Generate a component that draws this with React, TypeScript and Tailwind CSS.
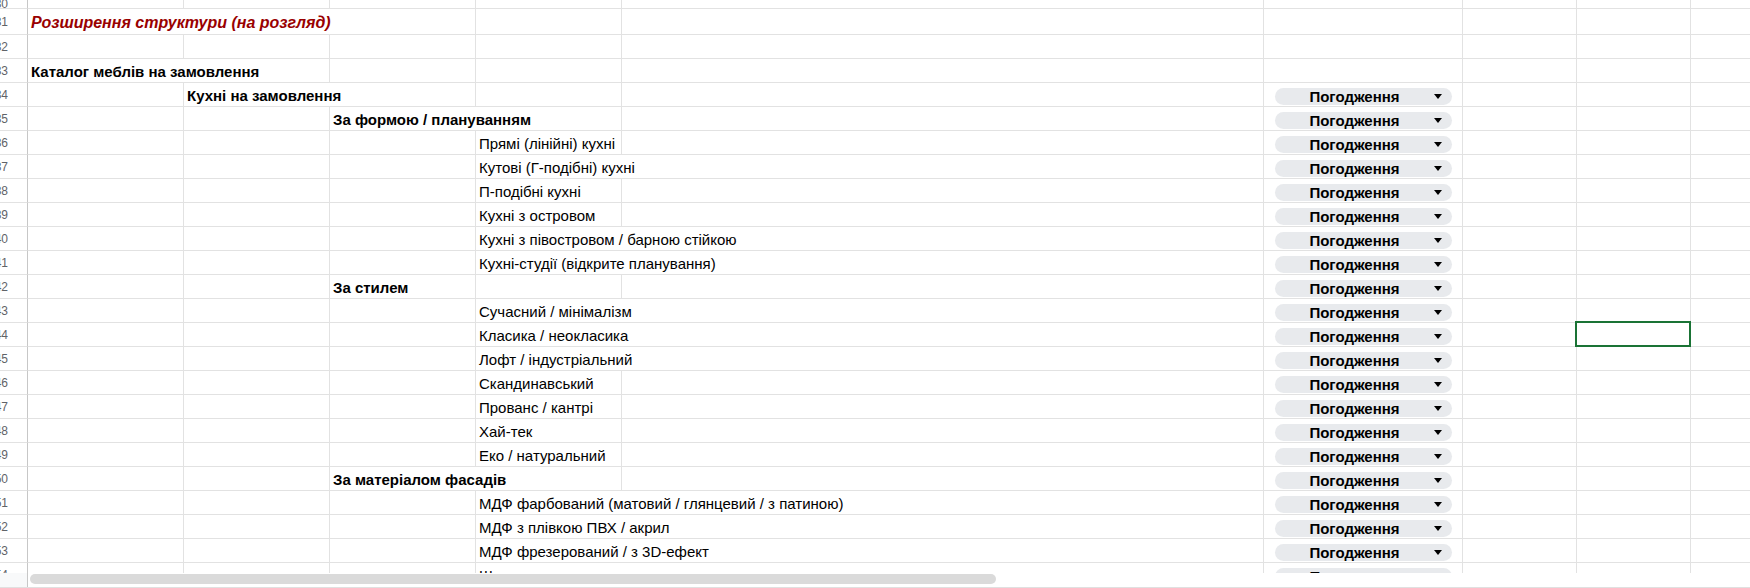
import React from "react";

const COLS = [156, 146, 146, 146, 642, 199, 114, 114, 200];

type Row = {
  n: number;
  h: number;
  col?: number;
  text?: string;
  span?: number;
  kind?: "title" | "bold" | "normal";
  chip?: boolean;
};

const rows: Row[] = [
  { n: 30, h: 9 },
  { n: 31, h: 26, col: 0, span: 3, kind: "title", text: "Розширення структури (на розгляд)" },
  { n: 32, h: 24 },
  { n: 33, h: 24, col: 0, span: 2, kind: "bold", text: "Каталог меблів на замовлення" },
  { n: 34, h: 24, col: 1, span: 2, kind: "bold", text: "Кухні на замовлення", chip: true },
  { n: 35, h: 24, col: 2, span: 2, kind: "bold", text: "За формою / плануванням", chip: true },
  { n: 36, h: 24, col: 3, span: 1, kind: "normal", text: "Прямі (лінійні) кухні", chip: true },
  { n: 37, h: 24, col: 3, span: 2, kind: "normal", text: "Кутові (Г-подібні) кухні", chip: true },
  { n: 38, h: 24, col: 3, span: 1, kind: "normal", text: "П-подібні кухні", chip: true },
  { n: 39, h: 24, col: 3, span: 1, kind: "normal", text: "Кухні з островом", chip: true },
  { n: 40, h: 24, col: 3, span: 2, kind: "normal", text: "Кухні з півостровом / барною стійкою", chip: true },
  { n: 41, h: 24, col: 3, span: 2, kind: "normal", text: "Кухні-студії (відкрите планування)", chip: true },
  { n: 42, h: 24, col: 2, span: 1, kind: "bold", text: "За стилем", chip: true },
  { n: 43, h: 24, col: 3, span: 2, kind: "normal", text: "Сучасний / мінімалізм", chip: true },
  { n: 44, h: 24, col: 3, span: 2, kind: "normal", text: "Класика / неокласика", chip: true },
  { n: 45, h: 24, col: 3, span: 2, kind: "normal", text: "Лофт / індустріальний", chip: true },
  { n: 46, h: 24, col: 3, span: 1, kind: "normal", text: "Скандинавський", chip: true },
  { n: 47, h: 24, col: 3, span: 1, kind: "normal", text: "Прованс / кантрі", chip: true },
  { n: 48, h: 24, col: 3, span: 1, kind: "normal", text: "Хай-тек", chip: true },
  { n: 49, h: 24, col: 3, span: 1, kind: "normal", text: "Еко / натуральний", chip: true },
  { n: 50, h: 24, col: 2, span: 2, kind: "bold", text: "За матеріалом фасадів", chip: true },
  { n: 51, h: 24, col: 3, span: 2, kind: "normal", text: "МДФ фарбований (матовий / глянцевий / з патиною)", chip: true },
  { n: 52, h: 24, col: 3, span: 2, kind: "normal", text: "МДФ з плівкою ПВХ / акрил", chip: true },
  { n: 53, h: 24, col: 3, span: 2, kind: "normal", text: "МДФ фрезерований / з 3D-ефект", chip: true },
  { n: 54, h: 24, col: 3, span: 2, kind: "normal", text: "Шпон", chip: true },
];

function Chip() {
  return (
    <div className="h-[17px] flex-1 rounded-full bg-[#e8eaed] flex items-center pr-[10px]">
      <span className="flex-1 text-center text-[15px] leading-[17px] font-bold text-black whitespace-nowrap">
        Погодження
      </span>
      <span className="w-0 h-0 border-l-[4px] border-r-[4px] border-t-[5px] border-l-transparent border-r-transparent border-t-black" />
    </div>
  );
}

function TextCell({ row, width }: { row: Row; width: number }) {
  const cls =
    row.kind === "title"
      ? "text-[16px] leading-[18px] italic font-bold text-[#990000]"
      : row.kind === "bold"
      ? "text-[15px] leading-[17px] font-bold text-black"
      : "text-[15px] leading-[17px] text-black";
  return (
    <div
      className="shrink-0 border-r border-b border-[#e2e2e2] flex items-end pl-[3px] pb-[2px] overflow-hidden whitespace-nowrap"
      style={{ width }}
    >
      <span className={cls}>{row.text}</span>
    </div>
  );
}

function GridRow({ row }: { row: Row }) {
  const cells: React.ReactNode[] = [];
  let i = 0;
  while (i < COLS.length) {
    if (row.text && row.col === i) {
      const span = row.span ?? 1;
      const w = COLS.slice(i, i + span).reduce((a, b) => a + b, 0);
      cells.push(<TextCell key={i} row={row} width={w} />);
      i += span;
      continue;
    }
    if (i === 5 && row.chip) {
      cells.push(
        <div
          key={i}
          className="shrink-0 border-r border-b border-[#e2e2e2] flex items-end pl-[11px] pr-[10px] pb-[1px]"
          style={{ width: COLS[i] }}
        >
          <Chip />
        </div>
      );
      i++;
      continue;
    }
    if (i === 7 && row.n === 44) {
      cells.push(
        <div
          key={i}
          className="shrink-0 border-r border-b border-[#e2e2e2] relative"
          style={{ width: COLS[i] }}
        >
          <div className="absolute -left-[2px] -top-[2px] -right-[1px] -bottom-[1px] border-2 border-[#1a7335]" />
        </div>
      );
      i++;
      continue;
    }
    cells.push(
      <div
        key={i}
        className={`shrink-0 border-b border-[#e2e2e2] ${i === COLS.length - 1 ? "flex-1" : "border-r"}`}
        style={{ width: COLS[i] }}
      />
    );
    i++;
  }
  return (
    <div className="flex shrink-0" style={{ height: row.h }}>
      <div className="w-[28px] shrink-0 border-r border-r-[#c7c7c7] border-b border-b-[#e2e2e2] flex items-center justify-end pr-[19px] overflow-hidden">
        <span className="text-[12px] leading-[14px] text-[#5f6368] whitespace-nowrap">{row.n}</span>
      </div>
      {cells}
    </div>
  );
}

export default function App() {
  return (
    <div className="w-[1750px] h-[588px] overflow-hidden bg-white flex flex-col font-['Liberation_Sans',Arial,sans-serif]">
      <div className="h-[573px] shrink-0 overflow-hidden flex flex-col">
        {rows.map((r) => (
          <GridRow key={r.n} row={r} />
        ))}
      </div>
      <div className="h-[14px] shrink-0 flex">
        <div className="w-[28px] shrink-0 bg-[#f8f9fa] border-r border-[#c7c7c7]" />
        <div className="flex-1 pl-[2px] pt-[1px]">
          <div className="w-[966px] h-[10px] rounded-full bg-[#dadada]" />
        </div>
      </div>
      <div className="h-px shrink-0 bg-[#e0e0e0]" />
    </div>
  );
}
